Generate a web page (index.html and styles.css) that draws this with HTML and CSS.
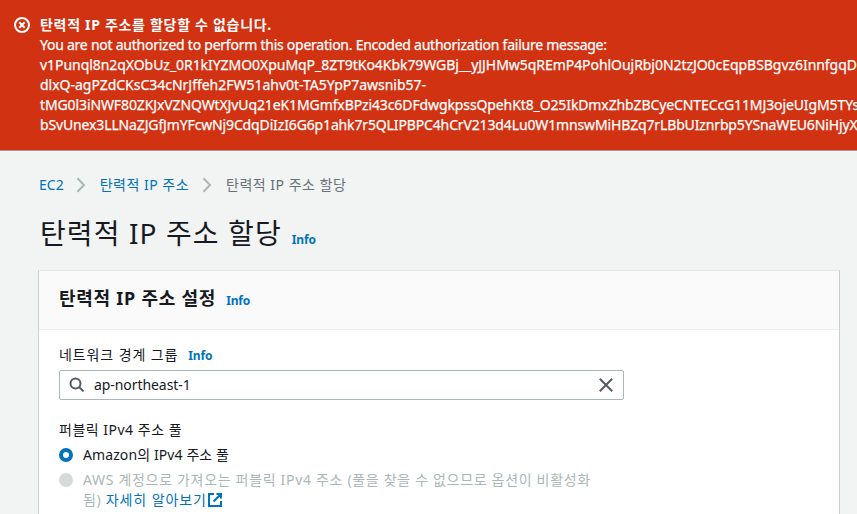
FILE: index.html
```
<!DOCTYPE html>
<html lang="ko">
<head>
<meta charset="utf-8">
<title>탄력적 IP 주소 할당</title>
<link rel="stylesheet" href="styles.css">
</head>
<body>
<div class="flash" role="alert">
  <svg class="flash-icon" viewBox="0 0 16 16"><circle cx="8" cy="8" r="7"/><path d="M5.300 5.300l5.400 5.400M10.700 5.300l-5.400 5.400"/></svg>
  <div class="flash-text">
    <div class="flash-title">탄력적 IP 주소를 할당할 수 없습니다.</div>
    <div class="line-a">You are not authorized to perform this operation. Encoded authorization failure message:</div>
    <div class="line-b">v1Punql8n2qXObUz_0R1kIYZMO0XpuMqP_8ZT9tKo4Kbk79WGBj__yJJHMw5qREmP4PohlOujRbj0N2tzJO0cEqpBSBgvz6InnfgqD</div>
    <div class="line-c">dlxQ-agPZdCKsC34cNrJffeh2FW51ahv0t-TA5YpP7awsnib57-</div>
    <div class="line-d">tMG0l3iNWF80ZKJxVZNQWtXJvUq21eK1MGmfxBPzi43c6DFdwgkpssQpehKt8_O25IkDmxZhbZBCyeCNTECcG11MJ3ojeUIgM5TYs</div>
    <div class="line-e">bSvUnex3LLNaZJGfJmYFcwNj9CdqDiIzI6G6p1ahk7r5QLIPBPC4hCrV213d4Lu0W1mnswMiHBZq7rLBbUIznrbp5YSnaWEU6NiHjyX</div>
  </div>
</div>
<main>
  <nav class="crumbs">
    <a>EC2</a>
    <svg class="chevron" viewBox="0 0 10 16"><path d="M1.500 1.200L8 8l-6.500 6.800"/></svg>
    <a class="crumb-link">탄력적 IP 주소</a>
    <svg class="chevron" viewBox="0 0 10 16"><path d="M1.500 1.200L8 8l-6.500 6.800"/></svg>
    <span class="current">탄력적 IP 주소 할당</span>
  </nav>
  <div class="page-head"><h1>탄력적 IP 주소 할당</h1><a class="info">Info</a></div>
  <section class="card">
    <header class="card-head"><h2>탄력적 IP 주소 설정</h2><a class="info">Info</a></header>
    <div class="card-body">
      <div class="label"><span class="group-label">네트워크 경계 그룹</span><a class="info">Info</a></div>
      <div class="input">
        <svg class="search" viewBox="0 0 16 16"><circle cx="6.500" cy="6.500" r="5"/><path d="M10.200 10.200L14.600 14.400"/></svg>
        <span class="value">ap-northeast-1</span>
        <svg class="clear" viewBox="0 0 16 16"><path d="M1.800 1.800L14.200 14.200M14.200 1.800L1.800 14.200"/></svg>
      </div>
      <div class="label pool">퍼블릭 IPv4 주소 풀</div>
      <div class="option"><i class="radio on"></i><div class="amazon">Amazon의 IPv4 주소 풀</div></div>
      <div class="option off"><i class="radio"></i><div class="own">AWS 계정으로 가져오는 퍼블릭 IPv4 주소 (풀을 찾을 수 없으므로 옵션이 비활성화<br>됨) <a>자세히 알아보기<svg class="ext" viewBox="0 0 16 16"><path d="M7 2H2v12h12V9M9.500 2H14v4.500M14 2L6.500 9.500"/></svg></a></div></div>
    </div>
  </section>
</main>
</body>
</html>
```
FILE: styles.css
```
* { box-sizing: border-box; }
body { margin: 0; height: 514px; overflow: hidden; background: #f2f3f3; color: #16191f; font: 14px/20px "Noto Sans", "Noto Sans CJK KR", sans-serif; }
a { color: #0073bb; }
h1, h2 { margin: 0; }
svg { fill: none; stroke: currentColor; flex: none; }
.flash { display: flex; height: 151px; padding: 15px 0 0 14px; background: #d13212; color: #fff; white-space: nowrap; border-bottom: 1px solid #a9988f; -webkit-text-stroke: 0.25px #fff; }
.flash-icon { width: 16px; height: 16px; margin: 2px 10px 0 0; stroke-width: 2; }
.flash-title { font-weight: 700; letter-spacing: 0.7px; -webkit-text-stroke: 0; }
.line-a { letter-spacing: -0.245px; }
.line-b { letter-spacing: -0.05px; }
.line-c { letter-spacing: -0.02px; }
.line-d { letter-spacing: -0.11px; }
.line-e { letter-spacing: -0.14px; }
main { padding: 24px 17px 0 39px; }
.crumbs { display: flex; align-items: center; height: 20px; }
.crumb-link { letter-spacing: 0.5px; }
.chevron { width: 10px; height: 16px; margin: 0 14px 0 12px; color: #aab7b8; stroke-width: 2; }
.crumb-link + .chevron { margin-left: 13px; }
.current { color: #687078; letter-spacing: 0.5px; }
.info { font-size: 12px; font-weight: 700; margin-left: 10px; letter-spacing: -0.15px; }
.page-head { display: flex; align-items: baseline; margin: 20px 0 0 1px; height: 55px; }
h1 { font-size: 28px; font-weight: 400; line-height: 36px; letter-spacing: 1.1px; }
.card { height: 260px; margin-left: -1px; background: #fff; border: 1px solid #c9cfcf; border-top-color: #e4e7e7; }
.card-head { display: flex; align-items: baseline; height: 59px; padding: 16px 20px; background: #fafafa; border-bottom: 1px solid #eaeded; }
h2 { font-size: 18px; line-height: 22px; letter-spacing: 0.75px; }
.card-body { padding: 15px 20px; width: 606px; }
.label { display: flex; align-items: baseline; }
.group-label { letter-spacing: 0.9px; }
.input { display: flex; align-items: center; width: 565px; height: 30px; margin-top: 4px; padding: 0 9px; border: 1px solid #aab7b8; border-radius: 2px; }
.search, .clear { width: 16px; height: 16px; stroke-width: 2; color: #545b64; }
.value { margin-left: 9px; flex: 1; letter-spacing: -0.07px; }
.pool { margin-top: 20px; letter-spacing: 0.5px; }
.option { display: flex; margin-top: 5px; white-space: nowrap; }
.radio { width: 14px; height: 14px; margin: 3px 10px 0 0; border-radius: 50%; background: #d5dbdb; flex: none; }
.on { background: #fff; border: 4px solid #0073bb; }
.amazon { letter-spacing: 0.1px; }
.off { color: #aab7b8; }
.own { letter-spacing: 0.68px; }
.own a { letter-spacing: 0.9px; }
.ext { width: 16px; height: 16px; stroke-width: 2; vertical-align: -3px; }
```
